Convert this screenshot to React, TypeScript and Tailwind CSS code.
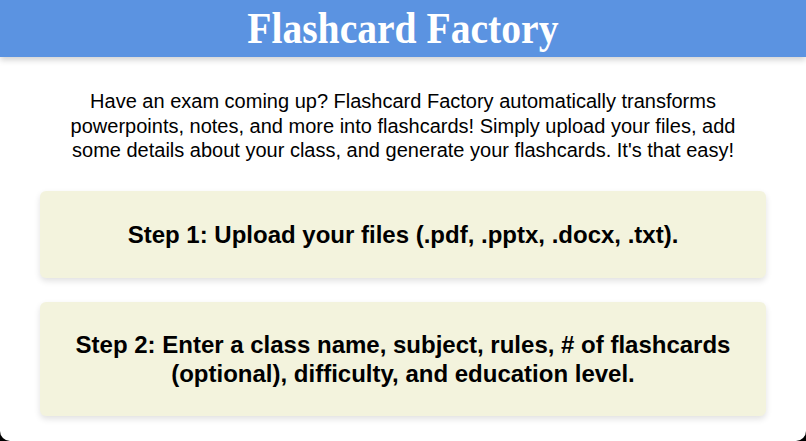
export default function App() {
  return (
    <div className="h-[441px] bg-black">
      <div className="flex h-full flex-col overflow-hidden rounded-b-[10px] bg-white font-['Liberation_Sans',Arial,sans-serif] text-black">
        <header className="flex h-[57px] items-center justify-center bg-[#5b93e1] shadow-[0_3px_6px_rgba(0,0,0,0.18)]">
          <h1 className="inline-block scale-x-[0.88] font-['Liberation_Serif','Times_New_Roman',serif] text-[45px] leading-none font-bold text-white">
            Flashcard Factory
          </h1>
        </header>
        <p className="mx-auto mt-[32px] max-w-[680px] text-center text-[20px] leading-[24.5px]">
          Have an exam coming up? Flashcard Factory automatically transforms powerpoints, notes, and more into
          flashcards! Simply upload your files, add some details about your class, and generate your flashcards.
          It's that easy!
        </p>
        <div className="mt-[28px] flex flex-col gap-[24px] px-[40px]">
          <section className="flex h-[87px] items-center justify-center rounded-[6px] bg-[#f3f3dd] px-6 shadow-[0_3px_6px_rgba(0,0,0,0.12)]">
            <h2 className="text-center text-[24px] leading-[29px] font-bold">
              Step 1: Upload your files (.pdf, .pptx, .docx, .txt).
            </h2>
          </section>
          <section className="flex h-[114px] items-center justify-center rounded-[6px] bg-[#f3f3dd] px-6 shadow-[0_3px_6px_rgba(0,0,0,0.12)]">
            <h2 className="max-w-[680px] text-center text-[24px] leading-[29px] font-bold">
              Step 2: Enter a class name, subject, rules, # of flashcards (optional), difficulty, and education level.
            </h2>
          </section>
        </div>
      </div>
    </div>
  );
}
